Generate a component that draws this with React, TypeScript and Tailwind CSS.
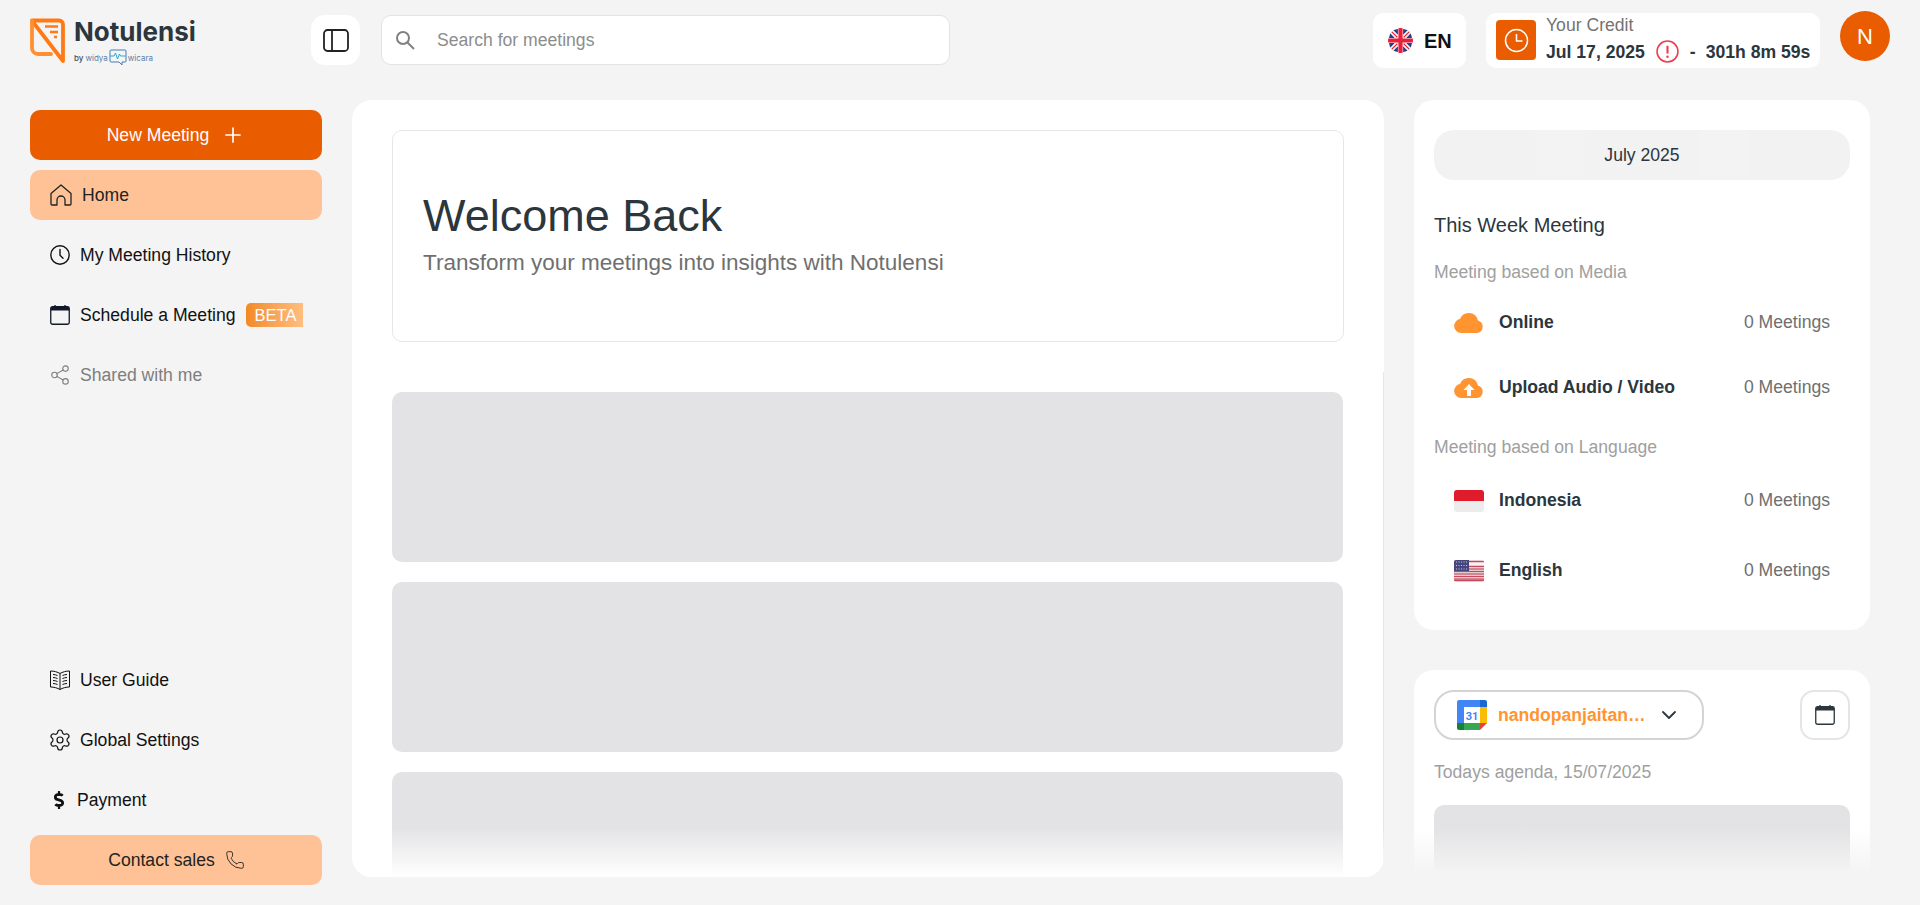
import { ChevronDown, Phone, Plus, Settings, Share2 } from "lucide-react";
import { FaDollarSign } from "react-icons/fa";
import type { ReactNode } from "react";

const sans = "font-['Liberation_Sans',Arial,sans-serif]";

function Logo() {
  return (
    <div className="flex items-start gap-[8px]">
      <svg width="36" height="46" viewBox="0 0 36 46" fill="none" className="shrink-0">
        <path d="M2 2.500H29a4 4 0 0 1 4 4V43L2.500 3.500" stroke="#FF7A14" strokeWidth="3.800" strokeLinejoin="round" strokeLinecap="round" />
        <path d="M2 3v27a6 6 0 0 0 6 6h13" stroke="#FF8F33" strokeWidth="3.800" strokeLinecap="round" />
        <path d="M15 8.500h13M20 14h8M24 19h3" stroke="#FF7A14" strokeWidth="2.400" />
      </svg>
      <div className="flex flex-col">
        <span className="font-['Inter',sans-serif] font-bold text-[26px] leading-[30px] text-[#2b363d] -mt-[1px]">Notulensi</span>
        <div className="flex items-center text-[8px] leading-none mt-[2px] text-[#44515a]">
          <span className="font-['Inter',sans-serif] font-medium mr-[2px]">by</span>
          <span className="font-['Inter',sans-serif] text-[#5b7fa6]">widya</span>
          <svg width="18" height="17" viewBox="0 0 18 17" fill="none" className="mx-[1px]">
            <path d="M2 1h14a1 1 0 0 1 1 1v10a1 1 0 0 1-1 1h-3v3l-3-3H2a1 1 0 0 1-1-1V2a1 1 0 0 1 1-1Z" stroke="#3E7FB8" />
            <path d="M1 7h4l1.500-3 2 6 2-5 1 2h5" stroke="#2BA9CF" />
          </svg>
          <span className="font-['Inter',sans-serif] text-[#5b7fa6]">wicara</span>
        </div>
      </div>
    </div>
  );
}

function UkFlag() {
  return (
    <svg width="25" height="25" viewBox="0 0 24 24" className="rounded-full shrink-0">
      <circle cx="12" cy="12" r="12" fill="#F7F7F7" />
      <path d="M5 2 9.500 6.500V1ZM14.500 1v5.500L19 2ZM1 9.500h5.500L2 5ZM22 5l-4.500 4.500H23ZM1 14.500 2 19l4.500-4.500ZM17.500 14.500 22 19l1-4.500ZM9.500 17.500 5 22l4.500 1ZM14.500 17.500V23l4.500-1Z" fill="#2A3F7E" />
      <path d="M10 0h4v10h10v4H14v10h-4V14H0v-4h10Z" fill="#E8203C" />
      <path d="M2.500 2.500l6.500 6.500M21.500 2.500 15 9M2.500 21.500 9 15M21.500 21.500 15 15" stroke="#E8203C" strokeWidth="1.300" />
    </svg>
  );
}

function UsFlag() {
  return (
    <svg width="30" height="22" viewBox="0 0 30 22" className="rounded-[2px]">
      <rect width="30" height="22" fill="#F3F3F5" />
      <path d="M0 1.500h30M0 6.500h30M0 11.500h30M0 16.500h30M0 20.500h30" stroke="#C9485B" strokeWidth="1.700" />
      <path d="M15 9h15M0 14h30M0 19h30" stroke="#A81E34" strokeWidth="1" />
      <rect width="15" height="11" fill="#46467F" />
      <path d="M2 2h11M2 5.500h11M2 9h11" stroke="#C9C9E0" strokeWidth="1" strokeDasharray="1 1.500" />
    </svg>
  );
}

function GoogleCalendar() {
  return (
    <svg width="30" height="30" viewBox="0 0 30 30" className="shrink-0">
      <path d="M2 0h21v7H7v16H0V2a2 2 0 0 1 2-2Z" fill="#4285F4" />
      <path d="M23 0h5a2 2 0 0 1 2 2v5h-7Z" fill="#1967D2" />
      <rect x="23" y="7" width="7" height="16" fill="#FBBC04" />
      <rect x="7" y="23" width="16" height="7" fill="#34A853" />
      <path d="M0 23h7v7H2a2 2 0 0 1-2-2Z" fill="#188038" />
      <path d="M23 23h7l-7 7Z" fill="#EA4335" />
      <rect x="7" y="7" width="16" height="16" fill="#fff" />
      <text x="15" y="20" textAnchor="middle" fontSize="11" fontWeight="700" fontFamily="Roboto, sans-serif" fill="#4285F4">31</text>
    </svg>
  );
}

function CalendarGlyph({ color = "#111827" }: { color?: string }) {
  return (
    <svg width="20" height="20" viewBox="0 0 20 20" fill="none" className="shrink-0">
      <rect x="0.750" y="1.750" width="18.500" height="17.500" rx="1.800" stroke={color} strokeWidth="1.300" />
      <path d="M0.750 3.500a1.800 1.800 0 0 1 1.800-1.750h14.900a1.800 1.800 0 0 1 1.800 1.750V5.500H.75Z" fill={color} />
      <path d="M5 0v2M15 0v2" stroke={color} strokeWidth="1.300" />
    </svg>
  );
}

function HomeGlyph() {
  return (
    <svg width="22" height="22" viewBox="0 0 22 22" fill="none" stroke="#222" strokeWidth="1.300" strokeLinejoin="round" className="shrink-0">
      <path d="M1 9.500 11 1l10 8.500V20a1 1 0 0 1-1 1h-5v-5a4 4 0 0 0-8 0v5H2a1 1 0 0 1-1-1Z" />
    </svg>
  );
}

function ClockGlyph() {
  return (
    <svg width="20" height="20" viewBox="0 0 20 20" fill="none" stroke="#111" strokeWidth="1.400" strokeLinecap="round" className="shrink-0">
      <circle cx="10" cy="10" r="9.200" />
      <path d="M10 4.500v5.800l3 3" />
    </svg>
  );
}

function BookGlyph() {
  return (
    <svg width="20" height="20" viewBox="0 0 20 20" fill="none" stroke="#111" strokeWidth="1" strokeLinejoin="round" className="shrink-0">
      <path d="M10 3.500C7.500 2 4 1 .5 1v16c3.500 0 7 1 9.500 2.500 2.500-1.500 6-2.500 9.500-2.500V1C16 1 12.500 2 10 3.500ZM10 3.500v16" />
      <path d="M3 4.500c1.500 0 3 .4 4.500 1M3 7.500c1.500 0 3 .4 4.500 1M3 10.500c1.500 0 3 .4 4.500 1M3 13.500c1.500 0 3 .4 4.500 1M17 4.500c-1.500 0-3 .4-4.500 1M17 7.500c-1.500 0-3 .4-4.500 1M17 10.500c-1.500 0-3 .4-4.500 1M17 13.500c-1.500 0-3 .4-4.500 1" />
    </svg>
  );
}

function NavItem({ icon, label, extra, muted }: { icon: ReactNode; label: string; extra?: ReactNode; muted?: boolean }) {
  return (
    <div className={`flex h-[50px] items-center gap-[10px] px-[20px] rounded-[10px] text-[17.600px] ${muted ? "text-[#7e7e7e]" : "text-[#111]"}`}>
      {icon}
      <span className="whitespace-nowrap">{label}</span>
      {extra}
    </div>
  );
}

function Sidebar() {
  return (
    <aside className="w-[352px] shrink-0 pl-[30px] pr-[30px] pt-[10px] pb-[20px] flex flex-col justify-between">
      <nav className="flex flex-col gap-[10px]">
        <button className="h-[50px] rounded-[10px] bg-[#E95C00] text-white text-[17.600px] flex items-center justify-center gap-[12px]">
          New Meeting
          <Plus size={24} strokeWidth={1.700} />
        </button>
        <div className="flex h-[50px] items-center gap-[10px] px-[20px] rounded-[10px] bg-[#FFC296] text-[17.600px] text-[#222]">
          <HomeGlyph />
          <span>Home</span>
        </div>
        <NavItem icon={<ClockGlyph />} label="My Meeting History" />
        <NavItem
          icon={<CalendarGlyph />}
          label="Schedule a Meeting"
          extra={<span className="h-[24px] w-[57px] shrink-0 flex items-center pl-[9px] rounded-l-[5px] bg-gradient-to-r from-[#F28A22] to-[#FFBE7F] text-white text-[16.500px]">BETA</span>}
        />
        <NavItem muted icon={<Share2 size={22} strokeWidth={1.200} className="-mx-[1px]" />} label="Shared with me" />
      </nav>
      <nav className="flex flex-col gap-[10px]">
        <NavItem icon={<BookGlyph />} label="User Guide" />
        <NavItem icon={<Settings size={24} strokeWidth={1.200} className="-mx-[2px]" />} label="Global Settings" />
        <NavItem icon={<FaDollarSign size={18} className="-mr-[1px]" />} label="Payment" />
        <button className="h-[50px] rounded-[10px] bg-[#FFC296] text-[17.600px] text-[#222] flex items-center justify-center gap-[10px] pl-[1px]">
          Contact sales
          <Phone size={20} strokeWidth={1.100} />
        </button>
      </nav>
    </aside>
  );
}

function Header() {
  return (
    <header className="h-[80px] shrink-0 flex items-start pt-[15px] pl-[30px] pr-[30px]">
      <div className="w-[281px] pt-[3px]">
        <Logo />
      </div>
      <button className="w-[49px] h-[50px] rounded-[14px] bg-white flex items-center justify-center">
        <svg width="26" height="23" viewBox="0 0 26 23" fill="none" stroke="#222" strokeWidth="1.800">
          <rect x="1" y="1" width="24" height="21" rx="3.500" />
          <path d="M9 1v21" />
        </svg>
      </button>
      <div className="ml-[21px] w-[569px] h-[50px] rounded-[10px] bg-white border border-[#e3e3e3] flex items-center pl-[13px] gap-[22px] text-[17.600px] text-[#8d8d8d]">
        <svg width="20" height="20" viewBox="0 0 20 20" fill="none" stroke="#808080" strokeWidth="2" className="shrink-0">
          <circle cx="8" cy="8" r="6" />
          <path d="M12.500 12.500 19 19" />
        </svg>
        <span>Search for meetings</span>
      </div>
      <div className="flex-1" />
      <div className="-mt-[2px] w-[93px] h-[55px] rounded-[10px] bg-white flex items-center pl-[15px] gap-[11px]">
        <UkFlag />
        <span className="text-[20px] font-bold text-[#111]">EN</span>
      </div>
      <div className="-mt-[2px] ml-[20px] w-[334px] h-[55px] rounded-[10px] bg-white flex items-start pl-[10px]">
        <div className="mt-[7px] w-[40px] h-[40px] shrink-0 rounded-[4px] bg-[#E95C00] flex items-center justify-center">
          <svg width="25" height="25" viewBox="0 0 25 25" fill="none" stroke="#fff" strokeWidth="1.500">
            <circle cx="12.500" cy="12.500" r="11" />
            <path d="M12.500 6v7h6" />
          </svg>
        </div>
        <div className="ml-[10px] flex flex-col text-[#2b363d]">
          <span className="text-[17.600px] leading-[20px] text-[#737373] mt-[2px]">Your Credit</span>
          <div className="flex items-center text-[17.600px] font-bold leading-[20px] mt-[5px] whitespace-nowrap">
            <span>Jul 17, 2025</span>
            <svg width="23" height="23" viewBox="0 0 22 22" fill="none" className="ml-[11px]">
              <circle cx="11" cy="11" r="10" stroke="#EE3E4E" strokeWidth="1.500" />
              <path d="M11 5.500v7.500" stroke="#EE3E4E" strokeWidth="2" />
              <circle cx="11" cy="16" r="1.200" fill="#EE3E4E" />
            </svg>
            <span className="ml-[11px]">-</span>
            <span className="ml-[10px]">301h 8m 59s</span>
          </div>
        </div>
      </div>
      <div className="-mt-[4px] ml-[20px] w-[50px] h-[50px] rounded-full bg-[#E95C00] text-white text-[22px] flex items-center justify-center">N</div>
    </header>
  );
}

function StatRow({ icon, label, height }: { icon: ReactNode; label: string; height: string }) {
  return (
    <div className={`flex items-center pl-[20px] pr-[20px] ${height}`}>
      <span className="w-[30px] flex justify-center">{icon}</span>
      <span className="ml-[15px] text-[17.600px] font-bold text-[#2b363d]">{label}</span>
      <span className="ml-auto text-[17.600px] text-[#6f6f6f]">0 Meetings</span>
    </div>
  );
}

function MainCard() {
  return (
    <main className="relative w-[1032px] h-[777px] shrink-0 bg-white rounded-[20px] overflow-hidden px-[40px] pt-[30px]">
      <div className="h-[212px] w-[952px] rounded-[10px] border border-[#e5e7eb] flex flex-col justify-center gap-[7px] pl-[30px] pb-[5px]">
        <h1 className="text-[45px] leading-[52px] text-[#2b363d]">Welcome Back</h1>
        <p className="text-[22.500px] leading-[28px] text-[#6f6f6f]">Transform your meetings into insights with Notulensi</p>
      </div>
      <div className="mt-[50px] flex flex-col gap-[20px] w-[951px]">
        <div className="h-[170px] rounded-[10px] bg-[#E3E3E5]" />
        <div className="h-[170px] rounded-[10px] bg-[#E3E3E5]" />
        <div className="h-[170px] rounded-[10px] bg-[#E3E3E5]" />
      </div>
      <div className="absolute right-0 top-[272px] bottom-[10px] w-px bg-[#e6e6e6]" />
      <div className="absolute inset-x-0 bottom-0 h-[50px] bg-gradient-to-b from-white/0 to-white" />
    </main>
  );
}

function RightColumn() {
  return (
    <div className="relative w-[456px] h-[773px] ml-[30px] overflow-hidden flex flex-col gap-[40px] shrink-0">
      <section className="h-[530px] shrink-0 bg-white rounded-[20px] px-[20px] pt-[30px]">
        <div className="h-[50px] rounded-[20px] overflow-hidden flex text-[17.600px] text-[#2b363d]">
          <span className="w-[101px] bg-[#F2F2F2]" />
          <span className="w-[50px] bg-[#F3F3F3]" />
          <span className="w-[114px] bg-[#F2F2F2] flex items-center justify-center whitespace-nowrap">July 2025</span>
          <span className="w-[49px] bg-[#F3F3F3]" />
          <span className="flex-1 bg-[#F2F2F2]" />
        </div>
        <h2 className="mt-[33px] text-[20px] leading-[24px] text-[#2b363d]">This Week Meeting</h2>
        <p className="mt-[23px] text-[17.600px] leading-[24px] text-[#a0a0a0]">Meeting based on Media</p>
        <StatRow
          height="h-[65px] mt-[6px]"
          label="Online"
          icon={
            <svg width="30" height="20" viewBox="0 0 30 20" fill="#FF9430">
              <path d="M7 20a7 7 0 0 1-1-13.900A9.500 9.500 0 0 1 15 0a9 9 0 0 1 9 7.400A6.500 6.500 0 0 1 23.500 20Z" />
            </svg>
          }
        />
        <StatRow
          height="h-[65px]"
          label="Upload Audio / Video"
          icon={
            <svg width="30" height="20" viewBox="0 0 30 20" fill="#FF9430">
              <path d="M7 20a7 7 0 0 1-1-13.900A9.500 9.500 0 0 1 15 0a9 9 0 0 1 9 7.400A6.500 6.500 0 0 1 23.500 20Z" />
              <path d="M15 6l-5.500 6H13v6h4v-6h3.500Z" fill="#fff" />
            </svg>
          }
        />
        <p className="mt-[15px] text-[17.600px] leading-[24px] text-[#a0a0a0]">Meeting based on Language</p>
        <StatRow
          height="h-[65px] mt-[9px]"
          label="Indonesia"
          icon={
            <span className="w-[30px] h-[22px] rounded-[3px] overflow-hidden flex flex-col">
              <span className="flex-1 bg-[#E01B2B]" />
              <span className="flex-1 bg-[#ECECEC]" />
            </span>
          }
        />
        <StatRow height="h-[75px]" label="English" icon={<UsFlag />} />
      </section>
      <section className="flex-1 bg-white rounded-t-[20px] px-[20px] pt-[20px]">
        <div className="flex items-center justify-between">
          <button className="w-[270px] h-[50px] rounded-[20px] border-2 border-[#D4D4D8] flex items-center pl-[21px]">
            <GoogleCalendar />
            <span className="ml-[11px] whitespace-nowrap text-[17.600px] font-bold text-[#FF9430]">nandopanjaitan…</span>
            <ChevronDown size={24} strokeWidth={1.800} className="ml-[11px] text-[#2b363d]" />
          </button>
          <button className="w-[50px] h-[50px] rounded-[14px] border-2 border-[#E5E5E5] flex items-center justify-center">
            <CalendarGlyph color="#2b363d" />
          </button>
        </div>
        <p className="mt-[20px] text-[17.600px] leading-[24px] text-[#a0a0a0]">Todays agenda, 15/07/2025</p>
        <div className="mt-[21px] h-[170px] rounded-[10px] bg-[#E3E3E5]" />
      </section>
      <div className="absolute inset-x-0 bottom-0 h-[45px] bg-gradient-to-b from-[#F4F4F4]/0 to-[#F4F4F4]" />
    </div>
  );
}

export default function App() {
  return (
    <div className={`${sans} h-screen w-full overflow-hidden bg-[#F4F4F4] flex flex-col`}>
      <Header />
      <div className="flex-1 flex min-h-0 pt-[20px]">
        <Sidebar />
        <MainCard />
        <RightColumn />
      </div>
    </div>
  );
}
